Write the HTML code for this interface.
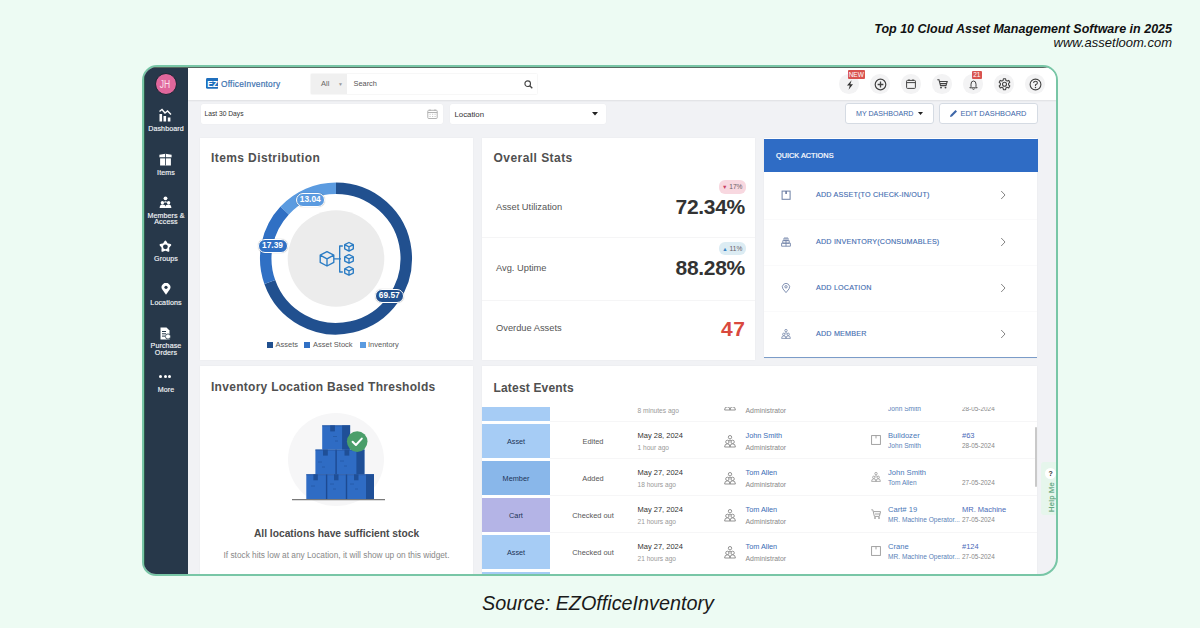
<!DOCTYPE html>
<html><head><meta charset="utf-8">
<style>
*{box-sizing:border-box;margin:0;padding:0}
html,body{width:1200px;height:628px;overflow:hidden;background:#edfbf3;font-family:"Liberation Sans",sans-serif;position:relative}
.a{position:absolute;white-space:nowrap}
#title{position:absolute;right:28px;top:22px;text-align:right;color:#111;font-style:italic}
#title .t1{font-weight:bold;font-size:12.5px;line-height:14px}
#title .t2{font-size:13px;line-height:13.3px}
#source{position:absolute;left:-2px;width:1200px;top:590.7px;text-align:center;font-style:italic;font-size:19.8px;line-height:24px;color:#1a1a1a}
#frame{position:absolute;left:142px;top:65px;width:916px;height:511px;border:2px solid #78c6a6;border-radius:15px 15px 18px 14px;overflow:hidden;background:#f1f2f5}
#in{position:absolute;left:-144px;top:-67px;width:1200px;height:628px}
#side{position:absolute;left:144px;top:67px;width:44px;height:510px;background:#27384a}
#hdr{position:absolute;left:188px;top:67px;width:870px;height:33px;background:#fff;box-shadow:0 1px 1.5px rgba(0,0,0,.08)}
#topline{position:absolute;left:144px;top:67px;width:912px;height:1px;background:#56695f}
.panel{position:absolute;background:#fff;box-shadow:0 0 2px rgba(0,0,0,.04)}
.pt{position:absolute;font-weight:bold;font-size:12px;letter-spacing:.28px;color:#505050;line-height:14px}
.sl{position:absolute;left:144px;width:44px;text-align:center;color:#f2f4f7;font-size:7.1px;line-height:6.5px;margin-top:.7px;letter-spacing:.1px;-webkit-text-stroke:.15px #f2f4f7}
.ic{position:absolute}
.circ{position:absolute;width:19.5px;height:19.5px;border-radius:50%;background:#f3f3f4;margin:.75px 0 0 .75px}
.badge{position:absolute;background:#d9534f;color:#fff;font-size:6.5px;line-height:9px;text-align:center;border-radius:1px}
.btn{position:absolute;top:103px;height:21.4px;border:1px solid #d5dbe3;border-radius:3px;background:#fff;color:#3f68a8;font-size:7.3px;line-height:19px}
.inp{position:absolute;background:#fff;border-radius:2px;box-shadow:0 0 1px rgba(0,0,0,.08)}
.pill{position:absolute;height:14px;border:1.5px solid #fff;border-radius:7px;color:#fff;font-weight:bold;font-size:8.4px;line-height:11px;text-align:center;box-shadow:0 0 1px 0 rgba(0,0,0,.35)}
.lg{top:340px;color:#5a5a5a;font-size:7.5px;line-height:9px}
.st{color:#555;font-size:9.3px;line-height:11px}
.big{color:#333;font-weight:bold;font-size:21px;line-height:22px;text-align:right;letter-spacing:-.3px}
.chip{height:13.5px;border-radius:6px;color:#6a6066;font-size:6.6px;line-height:13.5px;text-align:center}
.qa{color:#3f6cb0;font-size:7.2px;letter-spacing:.18px;line-height:10px;-webkit-text-stroke:.12px #3f6cb0}
</style></head><body>
<div id="title"><div class="t1">Top 10 Cloud Asset Management Software in 2025</div><div class="t2">www.assetloom.com</div></div>
<div id="frame"><div id="in">
  <div id="side"></div>
  <div id="hdr"></div>
  <div id="topline"></div>
  <div class="a" style="left:144px;top:67px;width:.8px;height:510px;background:#2e5a4c"></div>


  <!-- sidebar -->
  <div class="a" style="left:154.5px;top:72.7px;width:22px;height:22px;border-radius:50%;background:#e0679c;border:.6px solid #1a2633"></div>
  <div class="a" style="left:153.8px;top:78.5px;width:22px;text-align:center;color:#fbe0ec;font-size:10px;line-height:11px;transform:scaleX(.85)">JH</div>
  <svg class="ic" style="left:158px;top:108px" width="15" height="15" viewBox="0 0 15 15">
    <path d="M1.5 3.5 L4 1.5 L7 5 L9.5 3 L13 6.5" stroke="#fff" stroke-width="1.4" fill="none"/>
    <rect x="1.5" y="6" width="2.6" height="7.5" fill="#fff"/><rect x="5.5" y="8" width="2.6" height="5.5" fill="#fff"/><rect x="9.8" y="9.5" width="2.6" height="4" fill="#fff"/>
  </svg>
  <div class="sl" style="top:125px">Dashboard</div>
  <svg class="ic" style="left:159px;top:152.5px" width="13" height="13" viewBox="0 0 13 13">
    <path d="M0.4 1.8 L6.5 0.7 L12.6 1.8 V4.6 H0.4 Z" fill="#fff"/><rect x="1.1" y="5.2" width="10.8" height="7.3" fill="#fff"/>
    <rect x="6.1" y="0.5" width="0.8" height="12" fill="#27384a"/><rect x="0.3" y="4.5" width="12.4" height="0.7" fill="#27384a"/>
  </svg>
  <div class="sl" style="top:169px">Items</div>
  <svg class="ic" style="left:159px;top:196px" width="13" height="13" viewBox="0 0 13 13">
    <circle cx="6.5" cy="2.3" r="1.9" fill="#fff"/><path d="M4.6 6.5 Q6.5 3.8 8.4 6.5 Z" fill="#fff"/>
    <circle cx="3.4" cy="6.8" r="1.7" fill="#fff"/><circle cx="9.6" cy="6.8" r="1.7" fill="#fff"/>
    <path d="M0.6 12 Q0.8 8.6 3.4 8.6 Q6.5 8.6 6.5 11 Q6.5 8.6 9.6 8.6 Q12.2 8.6 12.4 12 Z" fill="#fff"/>
  </svg>
  <div class="sl" style="top:212px">Members &amp;<br>Access</div>
  <svg class="ic" style="left:155px;top:236px" width="21" height="21" viewBox="155 236 21 21">
    <path d="M165.40 241.40 L167.16 244.17 L170.35 244.99 L168.25 247.53 L168.46 250.81 L165.40 249.60 L162.34 250.81 L162.55 247.53 L160.45 244.99 L163.64 244.17 Z" fill="#fff" stroke="#fff" stroke-width="1.8" stroke-linejoin="round"/>
    <circle cx="165.4" cy="246.79999999999998" r="2.4" fill="#27384a"/>
  </svg>
  <div class="sl" style="top:255px">Groups</div>
  <svg class="ic" style="left:160.5px;top:283px" width="10" height="12" viewBox="0 0 10 12">
    <path d="M5 11.8 L1.3 6.6 A4.4 4.4 0 1 1 8.7 6.6 Z" fill="#fff"/><circle cx="5" cy="4.3" r="1.6" fill="#27384a"/>
  </svg>
  <div class="sl" style="top:299px">Locations</div>
  <svg class="ic" style="left:160px;top:326.5px" width="11" height="13" viewBox="0 0 11 13">
    <path d="M0.5 0.5 H6.5 L9.5 3.5 V12.5 H0.5 Z" fill="#fff"/>
    <rect x="2" y="4" width="4" height="1" fill="#27384a"/><rect x="2" y="6.3" width="4" height="1" fill="#27384a"/><rect x="2" y="8.6" width="3" height="1" fill="#27384a"/>
    <circle cx="8" cy="9.5" r="2.6" fill="#fff" stroke="#27384a" stroke-width=".8"/>
  </svg>
  <div class="sl" style="top:342.5px">Purchase<br>Orders</div>
  <div class="a" style="left:159.4px;top:375px;width:3px;height:3px;border-radius:50%;background:#fff"></div>
  <div class="a" style="left:163.9px;top:375px;width:3px;height:3px;border-radius:50%;background:#fff"></div>
  <div class="a" style="left:168.1px;top:375px;width:3px;height:3px;border-radius:50%;background:#fff"></div>
  <div class="sl" style="top:386px">More</div>

  <!-- header -->
  <svg class="ic" style="left:205.6px;top:78px" width="12.8" height="10.7" viewBox="0 0 12.8 10.7"><rect width="12.8" height="10.7" rx="1.5" fill="#1f6fbd"/><text x="6.4" y="8.6" text-anchor="middle" font-family="Liberation Sans" font-weight="bold" font-size="8.4" fill="#fff" letter-spacing="-.2">EZ</text></svg>
  <div class="a" style="left:221px;top:78.5px;color:#3d72b0;font-size:8.3px;letter-spacing:.25px;line-height:10px;-webkit-text-stroke:.2px #3d72b0">OfficeInventory</div>
  <div class="a" style="left:311px;top:73.5px;width:226px;height:20.5px;background:#fff;box-shadow:0 0 1.5px rgba(0,0,0,.12)"></div>
  <div class="a" style="left:311px;top:73.5px;width:36px;height:20.5px;background:#f0f0f0"></div>
  <div class="a" style="left:321px;top:79px;color:#666;font-size:7.5px;line-height:10px">All</div>
  <div class="a" style="left:338px;top:79px;color:#999;font-size:5px;line-height:10px">&#9660;</div>
  <div class="a" style="left:353.5px;top:79px;color:#555;font-size:7.4px;line-height:10px">Search</div>
  <svg class="ic" style="left:524px;top:79.5px" width="9" height="9" viewBox="0 0 9 9"><circle cx="3.7" cy="3.7" r="2.8" stroke="#444" stroke-width="1.1" fill="none"/><path d="M5.8 5.8 L8.3 8.3" stroke="#444" stroke-width="1.3"/></svg>
  <div class="circ" style="left:838.5px;top:73.5px"></div>
  <div class="circ" style="left:869.5px;top:73.5px"></div>
  <div class="circ" style="left:900.5px;top:73.5px"></div>
  <div class="circ" style="left:931.5px;top:73.5px"></div>
  <div class="circ" style="left:962.5px;top:73.5px"></div>
  <div class="circ" style="left:993.5px;top:73.5px"></div>
  <div class="circ" style="left:1024.5px;top:73.5px"></div>

  <svg class="ic" style="left:846px;top:79.5px" width="8" height="10" viewBox="0 0 8 10"><path d="M5.6 0.3 L1 5.6 H3.8 L2.6 9.7 L7 4.3 H4.3 Z" fill="#333"/></svg>
  <svg class="ic" style="left:873.5px;top:77.5px" width="13" height="13" viewBox="0 0 13 13"><circle cx="6.5" cy="6.5" r="5.3" stroke="#444" stroke-width="1.2" fill="none"/><path d="M6.5 3.6 V9.4 M3.6 6.5 H9.4" stroke="#444" stroke-width="1.3"/></svg>
  <svg class="ic" style="left:906px;top:79px" width="10" height="10" viewBox="0 0 10 10"><rect x=".6" y="1.4" width="8.8" height="8" rx=".8" stroke="#444" stroke-width="1" fill="none"/><path d="M.6 3.6 H9.4" stroke="#444" stroke-width="1"/><path d="M3 .2 V2 M7 .2 V2" stroke="#444" stroke-width="1"/></svg>
  <svg class="ic" style="left:936.8px;top:79px" width="11" height="10" viewBox="0 0 11 10"><path d="M.3 .8 H2 L3.5 6.6 H9 L10.2 2.4 H2.7 M3.3 4.6 H9.6" stroke="#444" stroke-width="1.05" fill="none"/><circle cx="4" cy="8.6" r=".95" fill="#444"/><circle cx="8.5" cy="8.6" r=".95" fill="#444"/></svg>
  <svg class="ic" style="left:968.5px;top:79.5px" width="9" height="10" viewBox="0 0 9 10"><path d="M4.5 1 Q7 1 7 4.2 V6.6 L8.2 7.8 H.8 L2 6.6 V4.2 Q2 1 4.5 1 Z" stroke="#444" stroke-width="1" fill="none"/><path d="M3.4 8.8 Q4.5 10 5.6 8.8" stroke="#444" stroke-width="1" fill="none"/></svg>
  <svg class="ic" style="left:997.5px;top:77.5px" width="13" height="13" viewBox="0 0 13 13"><path d="M5.4 0.8 H7.6 L7.9 2.4 L9.2 3.1 L10.7 2.4 L11.8 4.3 L10.6 5.4 V6.9 L11.8 8 L10.7 9.9 L9.2 9.3 L7.9 10 L7.6 11.7 H5.4 L5.1 10 L3.8 9.3 L2.3 9.9 L1.2 8 L2.4 6.9 V5.4 L1.2 4.3 L2.3 2.4 L3.8 3.1 L5.1 2.4 Z" stroke="#444" stroke-width="1.1" fill="none" stroke-linejoin="round"/><circle cx="6.5" cy="6.2" r="2" stroke="#444" stroke-width="1.1" fill="none"/></svg>
  <svg class="ic" style="left:1028.5px;top:77.5px" width="13" height="13" viewBox="0 0 13 13"><circle cx="6.5" cy="6.5" r="5.4" stroke="#444" stroke-width="1.1" fill="none"/><path d="M4.6 5 Q4.6 3.2 6.5 3.2 Q8.4 3.2 8.4 4.9 Q8.4 6 6.5 6.8 V8" stroke="#444" stroke-width="1.1" fill="none"/><circle cx="6.5" cy="9.6" r=".75" fill="#444"/></svg>
  <div class="badge" style="left:848px;top:70px;width:16.5px;height:9px">NEW</div>
  <div class="badge" style="left:972px;top:70.5px;width:9.5px;height:8.5px;line-height:8.5px">21</div>

  <!-- toolbar -->
  <div class="inp" style="left:200.5px;top:104px;width:242.5px;height:20px"></div>
  <div class="a" style="left:204.5px;top:109px;color:#333;font-size:6.7px;line-height:9px">Last 30 Days</div>
  <svg class="ic" style="left:427px;top:108.5px" width="11" height="10" viewBox="0 0 11 10"><rect x="0.8" y="1.3" width="9.4" height="8.2" rx=".8" stroke="#aaa" stroke-width=".9" fill="none"/><path d="M0.8 3.5 H10.2" stroke="#aaa" stroke-width=".9"/><path d="M3 0.3 V2 M8 0.3 V2" stroke="#aaa" stroke-width=".9"/><path d="M2.5 5.3h1.2M5 5.3h1.2M7.5 5.3h1.2M2.5 7.5h1.2M5 7.5h1.2M7.5 7.5h1.2" stroke="#bbb" stroke-width=".8"/></svg>
  <div class="inp" style="left:450px;top:104px;width:156px;height:20px"></div>
  <div class="a" style="left:454.5px;top:110px;color:#333;font-size:7.8px;line-height:10px">Location</div>
  <svg class="ic" style="left:592px;top:111.5px" width="6" height="4" viewBox="0 0 6 4"><path d="M0 0 H6 L3 3.5 Z" fill="#222"/></svg>
  <div class="btn" style="left:845px;width:88.5px"></div>
  <div class="a" style="left:856px;top:109px;color:#3d66a8;font-size:7.1px;line-height:10px">MY DASHBOARD</div>
  <svg class="ic" style="left:918px;top:112px" width="5" height="4" viewBox="0 0 5 4"><path d="M0 0 H5 L2.5 3 Z" fill="#222"/></svg>
  <div class="btn" style="left:939px;width:98.5px"></div>
  <svg class="ic" style="left:948.5px;top:108.5px" width="9" height="9" viewBox="0 0 9 9"><path d="M1 8 L1.5 6 L6.5 1 L8 2.5 L3 7.5 Z" fill="#3d66a8"/></svg>
  <div class="a" style="left:960.5px;top:109px;color:#3d66a8;font-size:7.45px;line-height:10px">EDIT DASHBOARD</div>

  <!-- panels -->
  <div class="panel" style="left:200px;top:138px;width:273px;height:222px"></div>
  <div class="panel" style="left:482px;top:138px;width:273px;height:222px"></div>
  <div class="panel" style="left:764px;top:138px;width:273px;height:220px;border-bottom:1px solid #7b9cc8"></div>
  <div class="panel" style="left:200px;top:366px;width:273px;height:220px"></div>
  <div class="panel" style="left:482px;top:366px;width:555px;height:220px"></div>


  <!-- items distribution -->
  <svg class="ic" style="left:0;top:0" width="1200" height="628">
    <path d="M336.00 188.25 A70.25 70.25 0 1 1 269.80 282.01" stroke="#21508f" stroke-width="11.5" fill="none"/>
    <path d="M269.80 282.01 A70.25 70.25 0 0 1 284.67 210.54" stroke="#3070c4" stroke-width="11.5" fill="none"/>
    <path d="M284.67 210.54 A70.25 70.25 0 0 1 336.00 188.25" stroke="#5b9be0" stroke-width="11.5" fill="none"/>
    <circle cx="336" cy="258.5" r="48.3" fill="#ececec"/>
  </svg>
  <svg class="ic" style="left:310px;top:235px" width="55" height="47" viewBox="310 235 55 47">
    <g stroke="#2a7cc4" stroke-width="1.35" fill="none" stroke-linejoin="round">
      <path d="M327.00 251.60 L333.80 255.20 L333.80 262.40 L327.00 266.00 L320.20 262.40 L320.20 255.20 Z M320.20 255.20 L327.00 258.80 L333.80 255.20 M327.00 258.80 V266.00"/><path d="M349.00 242.50 L353.30 244.65 L353.30 248.95 L349.00 251.10 L344.70 248.95 L344.70 244.65 Z M344.70 244.65 L349.00 246.80 L353.30 244.65 M349.00 246.80 V251.10"/><path d="M349.00 254.60 L353.30 256.75 L353.30 261.05 L349.00 263.20 L344.70 261.05 L344.70 256.75 Z M344.70 256.75 L349.00 258.90 L353.30 256.75 M349.00 258.90 V263.20"/><path d="M349.00 266.60 L353.30 268.75 L353.30 273.05 L349.00 275.20 L344.70 273.05 L344.70 268.75 Z M344.70 268.75 L349.00 270.90 L353.30 268.75 M349.00 270.90 V275.20"/>
      <path d="M334 258.8 H341 M342.8 246 H339.7 V272 H342.8"/>
    </g>
  </svg>
  <div class="pill" style="left:296px;top:192.5px;width:28.5px;background:#5b9be0">13.04</div>
  <div class="pill" style="left:257.5px;top:238.5px;width:30px;background:#3070c4">17.39</div>
  <div class="pill" style="left:375px;top:288.8px;width:28.5px;background:#21508f">69.57</div>
  <div class="a" style="left:266.5px;top:341.5px;width:6px;height:6px;background:#21508f"></div>
  <div class="a lg" style="left:275.5px">Assets</div>
  <div class="a" style="left:304px;top:341.5px;width:6px;height:6px;background:#3070c4"></div>
  <div class="a lg" style="left:313px">Asset Stock</div>
  <div class="a" style="left:360px;top:341.5px;width:6px;height:6px;background:#5b9be0"></div>
  <div class="a lg" style="left:368px">Inventory</div>

  <!-- overall stats -->
  <div class="a st" style="left:496px;top:201.5px">Asset Utilization</div>
  <div class="a big" style="left:675px;top:196px;width:70px">72.34%</div>
  <div class="a chip" style="left:719px;top:180.4px;width:26.5px;background:#f8d8e0"><span style="color:#c94060;font-size:5.5px;vertical-align:.5px">&#9660;</span> 17%</div>
  <div class="a" style="left:482px;top:236.5px;width:273px;height:1px;background:#f5f5f6"></div>
  <div class="a st" style="left:496px;top:262.5px">Avg. Uptime</div>
  <div class="a big" style="left:675px;top:257px;width:70px">88.28%</div>
  <div class="a chip" style="left:719px;top:241.5px;width:26.5px;background:#dcecf3"><span style="color:#3b82c4;font-size:5.5px;vertical-align:.5px">&#9650;</span> 11%</div>
  <div class="a" style="left:482px;top:299.5px;width:273px;height:1px;background:#f5f5f6"></div>
  <div class="a st" style="left:496px;top:323px">Overdue Assets</div>
  <div class="a big" style="left:675px;top:318px;width:70px;color:#d9493e;letter-spacing:.6px;margin-left:.6px">47</div>

  <!-- quick actions -->
  <div class="a" style="left:764px;top:138.5px;width:273.5px;height:33.5px;background:#2f6cc5"></div>
  <div class="a" style="left:776px;top:150.5px;color:#fff;font-size:7.35px;line-height:10px;-webkit-text-stroke:.2px #fff">QUICK ACTIONS</div>
  <svg class="ic" style="left:780.5px;top:190.2px" width="10" height="10" viewBox="0 0 10 10"><rect x="1.1" y="1.1" width="8" height="8.2" stroke="#7486aa" stroke-width="1.05" fill="none"/><path d="M5.1 1.1 V4" stroke="#6a7aa0" stroke-width="1.6"/></svg>
  <div class="a qa" style="left:816px;top:190.2px">ADD ASSET(TO CHECK-IN/OUT)</div>
  <svg class="ic" style="left:999.5px;top:190.2px" width="6" height="10" viewBox="0 0 6 10"><path d="M1.2 1 L5 5 L1.2 9" stroke="#777" stroke-width=".9" fill="none"/></svg>
  <svg class="ic" style="left:780.5px;top:236.6px" width="10" height="10" viewBox="0 0 10 10"><path d="M3 1 H7 V3.6 H3 Z M1.8 3.6 H8.2 V6.2 H1.8 Z M0.6 6.2 H9.4 V9.2 H0.6 Z M5 1 V9.2" stroke="#7486aa" stroke-width=".9" fill="none"/></svg>
  <div class="a qa" style="left:816px;top:236.6px">ADD INVENTORY(CONSUMABLES)</div>
  <svg class="ic" style="left:999.5px;top:236.6px" width="6" height="10" viewBox="0 0 6 10"><path d="M1.2 1 L5 5 L1.2 9" stroke="#777" stroke-width=".9" fill="none"/></svg>
  <svg class="ic" style="left:780.5px;top:282.5px" width="10" height="10" viewBox="0 0 10 10"><path d="M5 9.6 L1.9 5.8 A3.6 3.6 0 1 1 8.1 5.8 Z" stroke="#7486aa" stroke-width=".9" fill="none"/><circle cx="5" cy="3.8" r="1.2" stroke="#7486aa" stroke-width=".9" fill="none"/></svg>
  <div class="a qa" style="left:816px;top:282.5px">ADD LOCATION</div>
  <svg class="ic" style="left:999.5px;top:282.5px" width="6" height="10" viewBox="0 0 6 10"><path d="M1.2 1 L5 5 L1.2 9" stroke="#777" stroke-width=".9" fill="none"/></svg>
  <svg class="ic" style="left:780.5px;top:328.7px" width="10" height="10" viewBox="0 0 10 10"><circle cx="5" cy="1.6" r="1.2" stroke="#7486aa" stroke-width=".8" fill="none"/><path d="M3.6 4.6 Q5 2.6 6.4 4.6" stroke="#7486aa" stroke-width=".8" fill="none"/><circle cx="2.8" cy="5.3" r="1.2" stroke="#7486aa" stroke-width=".8" fill="none"/><circle cx="7.2" cy="5.3" r="1.2" stroke="#7486aa" stroke-width=".8" fill="none"/><path d="M0.6 9.4 Q0.6 6.8 2.8 6.8 Q5 6.8 5 9.4 Q5 6.8 7.2 6.8 Q9.4 6.8 9.4 9.4 Z" stroke="#7486aa" stroke-width=".8" fill="none"/></svg>
  <div class="a qa" style="left:816px;top:328.7px">ADD MEMBER</div>
  <svg class="ic" style="left:999.5px;top:328.7px" width="6" height="10" viewBox="0 0 6 10"><path d="M1.2 1 L5 5 L1.2 9" stroke="#777" stroke-width=".9" fill="none"/></svg>
  <div class="a" style="left:764px;top:218.5px;width:273px;height:1px;background:#fafafb"></div>
  <div class="a" style="left:764px;top:264.5px;width:273px;height:1px;background:#fafafb"></div>
  <div class="a" style="left:764px;top:310.5px;width:273px;height:1px;background:#fafafb"></div>

  <!-- inventory thresholds -->
  <div class="a" style="left:288px;top:413px;width:96px;height:93px;border-radius:50%;background:#f6f6f7"></div>
  <svg class="ic" style="left:290px;top:420px" width="100" height="85" viewBox="290 420 100 85">
      <rect x="322.2" y="425.4" width="27.9" height="24.2" fill="#2f6cc4"/><rect x="342.1" y="425.4" width="8" height="24.2" fill="#1f4f97"/>
      <rect x="315.4" y="449.6" width="49" height="24.7" fill="#2f6cc4"/><rect x="356.4" y="449.6" width="8" height="24.7" fill="#1f4f97"/>
      <rect x="335.4" y="449.6" width="1.4" height="24.7" fill="#1d4a92"/>
      <rect x="306.3" y="474.3" width="67.7" height="24.7" fill="#2f6cc4"/><rect x="366" y="474.3" width="8" height="24.7" fill="#1f4f97"/>
      <rect x="325.9" y="474.3" width="1.4" height="24.7" fill="#1d4a92"/><rect x="345.8" y="474.3" width="1.4" height="24.7" fill="#1d4a92"/>
      <path d="M322.2 425.8 H350.1 M315.4 450 H364.4 M306.3 474.7 H374" stroke="#24549e" stroke-width=".8"/>
      <rect x="330.2" y="425.4" width="4.7" height="6" fill="#1f4f97"/>
      <rect x="323" y="449.6" width="4.8" height="6" fill="#1f4f97"/><rect x="344.5" y="449.6" width="4.8" height="6" fill="#1f4f97"/>
      <rect x="313.4" y="474.3" width="4.4" height="6" fill="#1f4f97"/><rect x="334" y="474.3" width="4.5" height="6" fill="#1f4f97"/><rect x="354" y="474.3" width="4.5" height="6" fill="#1f4f97"/>
      <path d="M333 436.5h4M335 441h3M318 462h4M322 467h3M340 461h4M344 466h3M311 486h4M330 484h4M333 489h3M350 484h4M355 489h3" stroke="#2559a6" stroke-width=".8"/>
      <path d="M292 499.6 H385" stroke="#7a7a7a" stroke-width="1.2"/>
      <circle cx="357.2" cy="441.6" r="10.3" fill="#4a9e6a"/>
      <path d="M352.6 441.8 L355.9 445 L361.8 438.6" stroke="#fff" stroke-width="2" fill="none" stroke-linecap="round" stroke-linejoin="round"/>
  </svg>
  <div class="a" style="left:200px;width:273px;top:528px;text-align:center;color:#4a4a4a;font-weight:bold;font-size:10.25px;line-height:12px">All locations have sufficient stock</div>
  <div class="a" style="left:200px;width:273px;top:550px;text-align:center;color:#888;font-size:8.3px;line-height:10px">If stock hits low at any Location, it will show up on this widget.</div>

  <!-- latest events -->
  <div class="a" style="left:482px;top:387.4px;width:68px;height:34px;background:#a6ccf5"></div>
  <div class="a" style="left:637.5px;top:405.5px;color:#999;font-size:6.6px;line-height:9px">8 minutes ago</div>
  <div class="a" style="left:745.5px;top:405.5px;color:#888;font-size:6.9px;line-height:9px">Administrator</div>
  <div class="a" style="left:888px;top:404.0px;color:#5a82b8;font-size:6.6px;line-height:9px">John Smith</div>
  <div class="a" style="left:962px;top:404.0px;color:#888;font-size:6.4px;line-height:9px">28-05-2024</div>
  <div class="a" style="left:482px;top:424.4px;width:68px;height:34px;background:#a6ccf5"></div>
  <div class="a" style="left:482px;width:68px;top:436.8px;text-align:center;color:#1d3557;font-size:7.3px;line-height:10px">Asset</div>
  <div class="a" style="left:554px;width:78px;top:436.8px;text-align:center;color:#555;font-size:7.4px;line-height:10px">Edited</div>
  <div class="a" style="left:637.5px;top:430.5px;color:#333;font-size:7.5px;line-height:10px">May 28, 2024</div>
  <svg class="ic" style="left:723.5px;top:435.0px" width="12" height="13" viewBox="0 0 12 13"><g stroke="#888" stroke-width=".9" fill="none"><circle cx="6" cy="2.2" r="1.7"/><path d="M4.2 6.2 Q6 3.9 7.8 6.2"/><circle cx="3.4" cy="6.9" r="1.7"/><circle cx="8.6" cy="6.9" r="1.7"/><path d="M0.6 12 Q0.6 8.8 3.4 8.8 Q6 8.8 6 12 Q6 8.8 8.6 8.8 Q11.4 8.8 11.4 12 Z"/></g></svg>
  <div class="a" style="left:745.5px;top:430.5px;color:#3a6db5;font-size:7.3px;line-height:10px">John Smith</div>
  <svg class="ic" style="left:870.5px;top:435.0px" width="10" height="10" viewBox="0 0 10 10"><g stroke="#999" stroke-width=".9" fill="none"><rect x="0.6" y="0.6" width="8.8" height="8.8"/><path d="M5 0.6 V3.4"/></g></svg>
  <div class="a" style="left:888px;top:430.6px;color:#4a78b8;font-size:7.6px;line-height:10px">Bulldozer</div>
  <div class="a" style="left:637.5px;top:442.5px;color:#999;font-size:6.6px;line-height:9px">1 hour ago</div>
  <div class="a" style="left:745.5px;top:442.5px;color:#888;font-size:6.9px;line-height:9px">Administrator</div>
  <div class="a" style="left:888px;top:441.0px;color:#5a82b8;font-size:6.6px;line-height:9px">John Smith</div>
  <div class="a" style="left:962px;top:430.6px;color:#4a6ab8;font-size:7.5px;line-height:10px">#63</div>
  <div class="a" style="left:962px;top:441.0px;color:#888;font-size:6.4px;line-height:9px">28-05-2024</div>
  <div class="a" style="left:550px;top:421.2px;width:487px;height:1px;background:#f6f6f7"></div>
  <div class="a" style="left:482px;top:461.4px;width:68px;height:34px;background:#89b7ea"></div>
  <div class="a" style="left:482px;width:68px;top:473.8px;text-align:center;color:#1d3557;font-size:7.3px;line-height:10px">Member</div>
  <div class="a" style="left:554px;width:78px;top:473.8px;text-align:center;color:#555;font-size:7.4px;line-height:10px">Added</div>
  <div class="a" style="left:637.5px;top:467.5px;color:#333;font-size:7.5px;line-height:10px">May 27, 2024</div>
  <svg class="ic" style="left:723.5px;top:472.0px" width="12" height="13" viewBox="0 0 12 13"><g stroke="#888" stroke-width=".9" fill="none"><circle cx="6" cy="2.2" r="1.7"/><path d="M4.2 6.2 Q6 3.9 7.8 6.2"/><circle cx="3.4" cy="6.9" r="1.7"/><circle cx="8.6" cy="6.9" r="1.7"/><path d="M0.6 12 Q0.6 8.8 3.4 8.8 Q6 8.8 6 12 Q6 8.8 8.6 8.8 Q11.4 8.8 11.4 12 Z"/></g></svg>
  <div class="a" style="left:745.5px;top:467.5px;color:#3a6db5;font-size:7.3px;line-height:10px">Tom Allen</div>
  <svg class="ic" style="left:870.5px;top:472.0px" width="10" height="10" viewBox="0 0 10 10"><g stroke="#999" stroke-width=".8" fill="none"><circle cx="5" cy="1.6" r="1.2"/><path d="M3.6 4.6 Q5 2.6 6.4 4.6"/><circle cx="2.8" cy="5.3" r="1.2"/><circle cx="7.2" cy="5.3" r="1.2"/><path d="M0.6 9.4 Q0.6 6.8 2.8 6.8 Q5 6.8 5 9.4 Q5 6.8 7.2 6.8 Q9.4 6.8 9.4 9.4 Z"/></g></svg>
  <div class="a" style="left:888px;top:467.6px;color:#4a78b8;font-size:7.6px;line-height:10px">John Smith</div>
  <div class="a" style="left:637.5px;top:479.5px;color:#999;font-size:6.6px;line-height:9px">18 hours ago</div>
  <div class="a" style="left:745.5px;top:479.5px;color:#888;font-size:6.9px;line-height:9px">Administrator</div>
  <div class="a" style="left:888px;top:478.0px;color:#5a82b8;font-size:6.6px;line-height:9px">Tom Allen</div>
  <div class="a" style="left:962px;top:478.0px;color:#888;font-size:6.4px;line-height:9px">27-05-2024</div>
  <div class="a" style="left:550px;top:458.2px;width:487px;height:1px;background:#f6f6f7"></div>
  <div class="a" style="left:482px;top:498.4px;width:68px;height:34px;background:#b4b4e6"></div>
  <div class="a" style="left:482px;width:68px;top:510.8px;text-align:center;color:#1d3557;font-size:7.3px;line-height:10px">Cart</div>
  <div class="a" style="left:554px;width:78px;top:510.8px;text-align:center;color:#555;font-size:7.4px;line-height:10px">Checked out</div>
  <div class="a" style="left:637.5px;top:504.5px;color:#333;font-size:7.5px;line-height:10px">May 27, 2024</div>
  <svg class="ic" style="left:723.5px;top:509.0px" width="12" height="13" viewBox="0 0 12 13"><g stroke="#888" stroke-width=".9" fill="none"><circle cx="6" cy="2.2" r="1.7"/><path d="M4.2 6.2 Q6 3.9 7.8 6.2"/><circle cx="3.4" cy="6.9" r="1.7"/><circle cx="8.6" cy="6.9" r="1.7"/><path d="M0.6 12 Q0.6 8.8 3.4 8.8 Q6 8.8 6 12 Q6 8.8 8.6 8.8 Q11.4 8.8 11.4 12 Z"/></g></svg>
  <div class="a" style="left:745.5px;top:504.5px;color:#3a6db5;font-size:7.3px;line-height:10px">Tom Allen</div>
  <svg class="ic" style="left:870.5px;top:509.0px" width="10" height="10" viewBox="0 0 10 10"><g stroke="#999" stroke-width=".9" fill="none"><path d="M0.3 0.8 H1.8 L3.4 7.4 H8.4 L9.6 2.6 H2.6"/><path d="M4 5 H9"/><circle cx="4" cy="9" r=".6"/><circle cx="8" cy="9" r=".6"/></g></svg>
  <div class="a" style="left:888px;top:504.6px;color:#4a78b8;font-size:7.6px;line-height:10px">Cart# 19</div>
  <div class="a" style="left:637.5px;top:516.5px;color:#999;font-size:6.6px;line-height:9px">21 hours ago</div>
  <div class="a" style="left:745.5px;top:516.5px;color:#888;font-size:6.9px;line-height:9px">Administrator</div>
  <div class="a" style="left:888px;top:515.0px;color:#5a82b8;font-size:6.6px;line-height:9px">MR. Machine Operator...</div>
  <div class="a" style="left:962px;top:504.6px;color:#4a6ab8;font-size:7.5px;line-height:10px">MR. Machine</div>
  <div class="a" style="left:962px;top:515.0px;color:#888;font-size:6.4px;line-height:9px">27-05-2024</div>
  <div class="a" style="left:550px;top:495.2px;width:487px;height:1px;background:#f6f6f7"></div>
  <div class="a" style="left:482px;top:535.4px;width:68px;height:34px;background:#a6ccf5"></div>
  <div class="a" style="left:482px;width:68px;top:547.8px;text-align:center;color:#1d3557;font-size:7.3px;line-height:10px">Asset</div>
  <div class="a" style="left:554px;width:78px;top:547.8px;text-align:center;color:#555;font-size:7.4px;line-height:10px">Checked out</div>
  <div class="a" style="left:637.5px;top:541.5px;color:#333;font-size:7.5px;line-height:10px">May 27, 2024</div>
  <svg class="ic" style="left:723.5px;top:546.0px" width="12" height="13" viewBox="0 0 12 13"><g stroke="#888" stroke-width=".9" fill="none"><circle cx="6" cy="2.2" r="1.7"/><path d="M4.2 6.2 Q6 3.9 7.8 6.2"/><circle cx="3.4" cy="6.9" r="1.7"/><circle cx="8.6" cy="6.9" r="1.7"/><path d="M0.6 12 Q0.6 8.8 3.4 8.8 Q6 8.8 6 12 Q6 8.8 8.6 8.8 Q11.4 8.8 11.4 12 Z"/></g></svg>
  <div class="a" style="left:745.5px;top:541.5px;color:#3a6db5;font-size:7.3px;line-height:10px">Tom Allen</div>
  <svg class="ic" style="left:870.5px;top:546.0px" width="10" height="10" viewBox="0 0 10 10"><g stroke="#999" stroke-width=".9" fill="none"><rect x="0.6" y="0.6" width="8.8" height="8.8"/><path d="M5 0.6 V3.4"/></g></svg>
  <div class="a" style="left:888px;top:541.6px;color:#4a78b8;font-size:7.6px;line-height:10px">Crane</div>
  <div class="a" style="left:637.5px;top:553.5px;color:#999;font-size:6.6px;line-height:9px">21 hours ago</div>
  <div class="a" style="left:745.5px;top:553.5px;color:#888;font-size:6.9px;line-height:9px">Administrator</div>
  <div class="a" style="left:888px;top:552.0px;color:#5a82b8;font-size:6.6px;line-height:9px">MR. Machine Operator...</div>
  <div class="a" style="left:962px;top:541.6px;color:#4a6ab8;font-size:7.5px;line-height:10px">#124</div>
  <div class="a" style="left:962px;top:552.0px;color:#888;font-size:6.4px;line-height:9px">27-05-2024</div>
  <div class="a" style="left:550px;top:532.2px;width:487px;height:1px;background:#f6f6f7"></div>
  <div class="a" style="left:482px;top:572.4px;width:68px;height:34px;background:#a6ccf5"></div>
  <svg class="ic" style="left:723.5px;top:397.5px" width="12" height="13" viewBox="0 0 12 13"><g stroke="#888" stroke-width=".9" fill="none"><circle cx="6" cy="2.2" r="1.7"/><path d="M4.2 6.2 Q6 3.9 7.8 6.2"/><circle cx="3.4" cy="6.9" r="1.7"/><circle cx="8.6" cy="6.9" r="1.7"/><path d="M0.6 12 Q0.6 8.8 3.4 8.8 Q6 8.8 6 12 Q6 8.8 8.6 8.8 Q11.4 8.8 11.4 12 Z"/></g></svg>
  <div class="a" style="left:482px;top:366px;width:555px;height:41px;background:#fff"></div>
  <div class="a" style="left:1034.5px;top:426.5px;width:2.2px;height:60.5px;border-radius:1px;background:#c9c9c9"></div>
  <div class="a" style="left:1040.5px;top:462px;width:18px;height:53px;border-radius:3px 0 0 3px;background:#e6f6ec"></div>
  <div class="a" style="left:1045.2px;top:468px;width:11px;height:11px;border-radius:50%;background:#fff;color:#333;font-weight:bold;font-size:7px;line-height:11px;text-align:center">?</div>
  <div class="a" style="left:1051px;top:496.5px;transform:translate(-50%,-50%) rotate(-90deg);color:#5aa37a;font-size:7.5px;line-height:9px;letter-spacing:.3px;-webkit-text-stroke:.15px #5aa37a">Help Me</div>
  <div class="pt a" style="left:211px;top:150.5px;letter-spacing:.4px">Items Distribution</div>
  <div class="pt a" style="left:493.5px;top:150.5px;letter-spacing:.45px">Overall Stats</div>
  <div class="pt a" style="left:211px;top:379.5px">Inventory Location Based Thresholds</div>
  <div class="pt a" style="left:493.5px;top:381px;letter-spacing:.18px">Latest Events</div>
</div></div>
<div id="source">Source: EZOfficeInventory</div>
</body></html>
